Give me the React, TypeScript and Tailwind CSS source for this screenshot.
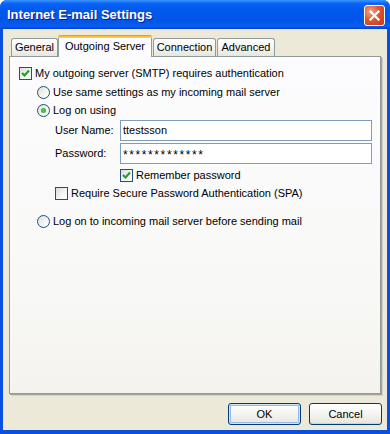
import React from "react";

const font = { fontFamily: '"Liberation Sans", Arial, sans-serif' };

function Checkbox({ checked }: { checked?: boolean }) {
  return (
    <div className="w-[13px] h-[13px] shrink-0 border border-[#1C5180] bg-[linear-gradient(135deg,#DCDCD7_0%,#F6F6F4_60%,#FFFFFF_100%)] flex items-center justify-center">
      {checked && (
        <svg width="9" height="9" viewBox="0 0 9 9">
          <path d="M1 4 L3.5 6.5 L8 1.5" fill="none" stroke="#21A121" strokeWidth="2.2" />
        </svg>
      )}
    </div>
  );
}

function Radio({ checked }: { checked?: boolean }) {
  return (
    <div className="w-[13px] h-[13px] shrink-0 rounded-full border border-[#1C5180] bg-[linear-gradient(135deg,#DCDCD7_0%,#F6F6F4_60%,#FFFFFF_100%)] flex items-center justify-center">
      {checked && <div className="w-[5px] h-[5px] rounded-full bg-[radial-gradient(circle,#55D555_0%,#21A121_100%)]" />}
    </div>
  );
}

function Tab({ label, w, selected }: { label: string; w: string; selected?: boolean }) {
  if (selected) {
    return (
      <div
        className={`${w} h-[22px] -mb-px relative z-10 bg-[#FCFCFE] border-x border-[#919B9C] rounded-t-[3px] flex flex-col`}
      >
        <div className="h-[3px] rounded-t-[3px] bg-[linear-gradient(to_bottom,#E68B2C_0%,#FFC73C_60%,#FFD36B_100%)] -mx-px" />
        <div className="flex-1 flex items-center justify-center text-[11px] text-black pb-[2px]">{label}</div>
      </div>
    );
  }
  return (
    <div
      className={`${w} h-[18px] border border-b-0 border-[#919B9C] rounded-t-[3px] bg-[linear-gradient(to_bottom,#FFFFFF_0%,#F3F3EF_60%,#E6E5DE_100%)] flex items-center justify-center text-[11px] text-black`}
    >
      {label}
    </div>
  );
}

function Button({ label, def }: { label: string; def?: boolean }) {
  return (
    <div
      className={`w-[73px] h-[22px] rounded-[3px] border border-[#003C74] bg-[linear-gradient(to_bottom,#FFFFFF_0%,#F4F4F0_50%,#E5E4DC_100%)] flex items-center justify-center text-[11px] text-black ${
        def ? "shadow-[inset_0_0_0_1px_#CEE7FF,inset_0_0_0_2px_#98B8EA]" : "shadow-[inset_0_-1px_0_#D6D0C5]"
      }`}
    >
      {label}
    </div>
  );
}

export default function App() {
  return (
    <div className="w-[390px] h-[434px] bg-white" style={font}>
      <div className="w-[390px] h-[434px] flex flex-col rounded-t-[7px] overflow-hidden bg-[#0A4FE0]">
        {/* Title bar */}
        <div className="h-[29px] shrink-0 flex items-center pl-[7px] pr-[4px] bg-[linear-gradient(to_bottom,#3D95FF_0%,#0A64F4_12%,#0058EE_35%,#0056E8_75%,#0A5FF0_90%,#003DD7_100%)]">
          <span className="text-white font-bold text-[13px] tracking-[0px] [text-shadow:1px_1px_0_#0A1E8C] flex-1 pt-[1px]">
            Internet E-mail Settings
          </span>
          <div className="w-[21px] h-[21px] rounded-[3px] border border-white bg-[radial-gradient(circle_at_30%_30%,#F4A68A_0%,#E2552E_45%,#C4381A_100%)] flex items-center justify-center mt-[1px] mr-[1px]">
            <svg width="11" height="11" viewBox="0 0 11 11">
              <path d="M1.5 1.5 L9.5 9.5 M9.5 1.5 L1.5 9.5" stroke="white" strokeWidth="2.2" strokeLinecap="square" />
            </svg>
          </div>
        </div>
        {/* Body */}
        <div className="flex-1 mx-[3px] mb-[4px] bg-[#ECE9D8] flex flex-col pl-[6px] pr-[5px] pt-[6px]">
          {/* Tabs */}
          <div className="h-[21px] flex items-end pl-[2px]">
            <Tab label="General" w="w-[47px]" />
            <Tab label="Outgoing Server" w="w-[94px]" selected />
            <div className="ml-[1px]">
              <Tab label="Connection" w="w-[63px]" />
            </div>
            <div className="ml-[1px]">
              <Tab label="Advanced" w="w-[58px]" />
            </div>
          </div>
          {/* Panel */}
          <div className="w-[372px] h-[338px] border border-[#919B9C] bg-[linear-gradient(to_bottom,#FCFCFE_0%,#F8F8F6_70%,#F4F3EE_100%)] shadow-[1px_1px_0_#A3A5A0,2px_2px_0_#D2D0C4] flex flex-col text-[11px] text-black">
            <div className="mt-[10px] h-[13px] pl-[9px] flex items-center gap-[3px]">
              <Checkbox checked />
              <span>My outgoing server (SMTP) requires authentication</span>
            </div>
            <div className="mt-[6px] h-[13px] pl-[27px] flex items-center gap-[3px]">
              <Radio />
              <span>Use same settings as my incoming mail server</span>
            </div>
            <div className="mt-[5px] h-[13px] pl-[27px] flex items-center gap-[3px]">
              <Radio checked />
              <span>Log on using</span>
            </div>
            <div className="mt-[3px] h-[21px] pl-[45px] pr-[8px] flex items-center">
              <span className="w-[65px]">User Name:</span>
              <div className="flex-1 h-[21px] border border-[#7F9DB9] bg-white flex items-center pl-[2px]">ttestsson</div>
            </div>
            <div className="mt-[2px] h-[21px] pl-[45px] pr-[8px] flex items-center">
              <span className="w-[65px]">Password:</span>
              <div className="flex-1 h-[21px] border border-[#7F9DB9] bg-white flex items-center pl-[2px] pt-[3px] tracking-[1.6px] text-[12px]">
                *************
              </div>
            </div>
            <div className="mt-[5px] h-[13px] pl-[110px] flex items-center gap-[3px]">
              <Checkbox checked />
              <span>Remember password</span>
            </div>
            <div className="mt-[5px] h-[13px] pl-[45px] flex items-center gap-[3px]">
              <Checkbox />
              <span>Require Secure Password Authentication (SPA)</span>
            </div>
            <div className="mt-[15px] h-[13px] pl-[27px] flex items-center gap-[3px]">
              <Radio />
              <span>Log on to incoming mail server before sending mail</span>
            </div>
          </div>
          {/* Buttons */}
          <div className="mt-[9px] flex justify-end gap-[8px]">
            <Button label="OK" def />
            <Button label="Cancel" />
          </div>
        </div>
      </div>
    </div>
  );
}
